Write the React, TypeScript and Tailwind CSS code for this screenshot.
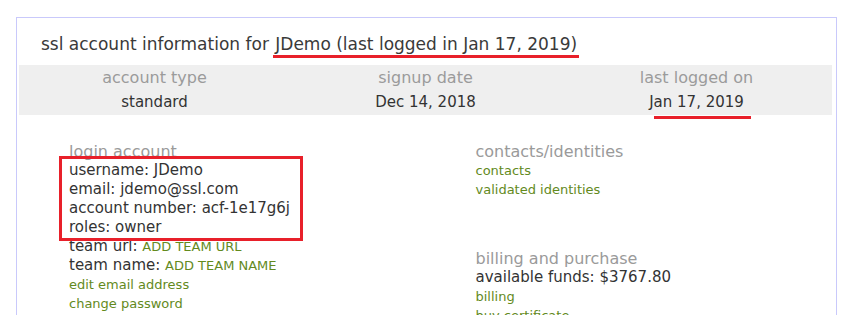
const font = { fontFamily: '"DejaVu Sans", "Liberation Sans", sans-serif' };

function Line({ children, className = "" }: { children: React.ReactNode; className?: string }) {
  return <div className={`leading-[19px] ${className}`}>{children}</div>;
}

function GreenLink({ children }: { children: React.ReactNode }) {
  return <Line className="text-[13px] text-[#638a1d]">{children}</Line>;
}

export default function App() {
  return (
    <div className="w-[853px] h-[315px] overflow-hidden bg-white pt-[17px] pl-[16px]" style={font}>
      <div className="w-[821px] h-[320px] border border-b-0 border-[#c9c9fb] pl-[2px] pr-[4px]">
        <div className="pt-[16px] pl-[22px] mb-[7px] text-[17px] text-[#3a3a3a] leading-[20px]">
          ssl account information for{" "}
          <span className="inline-block border-b-[3px] border-[#e8202a] pb-[1px] pl-[2px] pr-[2px] -ml-[1px]">
            JDemo (last logged in Jan 17, 2019)
          </span>
        </div>

        <div className="grid grid-cols-3 bg-[#efefef] h-[50px] text-center leading-[25px]">
          <div>
            <div className="text-[16px] text-[#9b9b9b]">account type</div>
            <div className="text-[15px] text-[#333]">standard</div>
          </div>
          <div>
            <div className="text-[16px] text-[#9b9b9b]">signup date</div>
            <div className="text-[15px] text-[#333]">Dec 14, 2018</div>
          </div>
          <div>
            <div className="text-[16px] text-[#9b9b9b]">last logged on</div>
            <div className="text-[15px] text-[#333]">
              <span className="relative inline-block">
                Jan 17, 2019
                <span className="absolute left-[5px] top-full mt-[1px] w-[97px] h-[3px] bg-[#e8202a]" />
              </span>
            </div>
          </div>
        </div>

        <div className="grid grid-cols-2 pt-[27px] text-[15px] text-[#333]">
          <div className="pl-[50px]">
            <Line className="text-[16px] text-[#9a9a9a]">login account</Line>
            <div className="relative">
              <Line>username: JDemo</Line>
              <Line>email: jdemo@ssl.com</Line>
              <Line>account number: acf-1e17g6j</Line>
              <Line>roles: owner</Line>
              <span className="absolute left-[-10px] top-[-5px] w-[244px] h-[85px] border-[3px] border-[#e8202a]" />
            </div>
            <Line>
              team url: <span className="text-[13px] text-[#638a1d]">ADD TEAM URL</span>
            </Line>
            <Line>
              team name: <span className="text-[13px] text-[#638a1d]">ADD TEAM NAME</span>
            </Line>
            <GreenLink>edit email address</GreenLink>
            <GreenLink>change password</GreenLink>
          </div>
          <div className="pl-[50px]">
            <Line className="text-[16px] text-[#9a9a9a]">contacts/identities</Line>
            <GreenLink>contacts</GreenLink>
            <GreenLink>validated identities</GreenLink>
            <Line className="mt-[50px] text-[16px] text-[#9a9a9a]">billing and purchase</Line>
            <Line>available funds: $3767.80</Line>
            <GreenLink>billing</GreenLink>
            <GreenLink>buy certificate</GreenLink>
          </div>
        </div>
      </div>
    </div>
  );
}
